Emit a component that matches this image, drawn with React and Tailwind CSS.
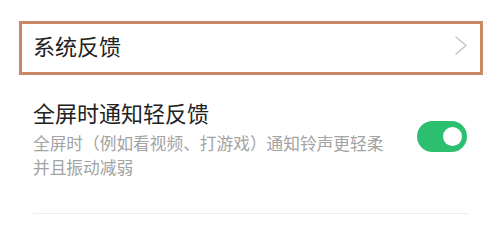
export default function App() {
    return (
        <div
            className="w-[500px] h-[223px] bg-white overflow-hidden"
            style={{ fontFamily: '"Noto Sans CJK SC", "Noto Sans", sans-serif' }}
        >
            {/* 系统反馈 (highlighted row) */}
            <div className="pt-[21px] pl-[19px]">
                <div className="w-[464px] h-[54px] border-[3px] border-[#c98868] flex items-center justify-between pl-[11px] pr-[13px] pb-[6px]">
                    <span className="text-[22px] leading-[30px] text-[#222222]">系统反馈</span>
                    <svg width="12" height="19" viewBox="0 0 12 19" fill="none">
                        <polyline points="1,1 11,9.5 1,18" stroke="#c6c6c6" strokeWidth="1.5" strokeLinecap="round" strokeLinejoin="round" />
                    </svg>
                </div>
            </div>

            {/* 全屏时通知轻反馈 */}
            <div className="mt-[22px] pl-[33px] pr-[33px] flex justify-between">
                <div>
                    <div className="text-[22px] leading-[30px] text-[#222222]">全屏时通知轻反馈</div>
                    <div className="mt-[5px] text-[16.7px] leading-[23.5px] text-[#a3a3a3]">
                        全屏时（例如看视频、打游戏）通知铃声更轻柔
                        <br />
                        并且振动减弱
                    </div>
                </div>
                <div className="mt-[24px] w-[50px] h-[31px] rounded-full bg-[#2cbf6f] flex items-center justify-end pr-[5px] shrink-0">
                    <div className="w-[19px] h-[19px] rounded-full bg-white"></div>
                </div>
            </div>

            <div className="mt-[34px] ml-[33px] w-[435px] h-px bg-[#eeeeee]"></div>
        </div>
    );
}
